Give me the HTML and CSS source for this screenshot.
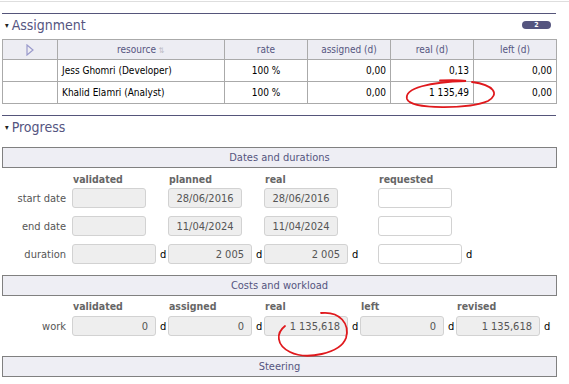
FILE: index.html
```html
<!DOCTYPE html>
<html>
<head>
<meta charset="utf-8">
<link rel="stylesheet" href="styles.css">
</head>
<body>
<div class="topline"></div>
<div class="page">
  <div class="title">
    <span class="caret">&#9662;</span><span class="title-text">Assignment</span>
    <span class="badge">2</span>
  </div>
  <table class="grid">
    <colgroup>
      <col class="c-icon"><col class="c-res"><col class="c-num"><col class="c-num"><col class="c-num"><col class="c-num">
    </colgroup>
    <thead>
      <tr>
        <th><svg class="tri" width="8" height="12" viewBox="0 0 8 12"><polygon points="1,1 7,6 1,11" fill="none" stroke="#9a9acc" stroke-width="1.2"/></svg></th>
        <th>resource <span class="sort">&#8645;</span></th>
        <th>rate</th>
        <th>assigned (d)</th>
        <th>real (d)</th>
        <th>left (d)</th>
      </tr>
    </thead>
    <tbody>
      <tr>
        <td></td><td class="name">Jess Ghomri (Developer)</td><td class="ctr">100 %</td><td class="num">0,00</td><td class="num">0,13</td><td class="num">0,00</td>
      </tr>
      <tr>
        <td></td><td class="name">Khalid Elamri (Analyst)</td><td class="ctr">100 %</td><td class="num">0,00</td><td class="num">1 135,49</td><td class="num">0,00</td>
      </tr>
    </tbody>
  </table>

  <div class="title title-2">
    <span class="caret">&#9662;</span><span class="title-text">Progress</span>
  </div>

  <div class="band band-first">Dates and durations</div>
  <div class="heads dates-cols">
    <div></div><div class="colh">validated</div><div class="colh">planned</div><div class="colh">real</div><div class="colh">requested</div>
  </div>
  <div class="rows dates-cols">
    <div class="lbl">start date</div>
    <div class="cell"><div class="field f-date"></div></div>
    <div class="cell"><div class="field f-date ctr">28/06/2016</div></div>
    <div class="cell"><div class="field f-date ctr">28/06/2016</div></div>
    <div class="cell"><div class="field f-date white"></div></div>

    <div class="lbl">end date</div>
    <div class="cell"><div class="field f-date"></div></div>
    <div class="cell"><div class="field f-date ctr">11/04/2024</div></div>
    <div class="cell"><div class="field f-date ctr">11/04/2024</div></div>
    <div class="cell"><div class="field f-date white"></div></div>

    <div class="lbl">duration</div>
    <div class="cell"><div class="field f-num"></div><span class="unit">d</span></div>
    <div class="cell"><div class="field f-num">2 005</div><span class="unit">d</span></div>
    <div class="cell"><div class="field f-num">2 005</div><span class="unit">d</span></div>
    <div class="cell"><div class="field f-num white"></div><span class="unit">d</span></div>
  </div>

  <div class="band band-costs">Costs and workload</div>
  <div class="heads costs-cols">
    <div></div><div class="colh">validated</div><div class="colh">assigned</div><div class="colh">real</div><div class="colh">left</div><div class="colh">revised</div>
  </div>
  <div class="rows costs-cols">
    <div class="lbl">work</div>
    <div class="cell"><div class="field f-num">0</div><span class="unit">d</span></div>
    <div class="cell"><div class="field f-num">0</div><span class="unit">d</span></div>
    <div class="cell"><div class="field f-num">1 135,618</div><span class="unit">d</span></div>
    <div class="cell"><div class="field f-num">0</div><span class="unit">d</span></div>
    <div class="cell"><div class="field f-num">1 135,618</div><span class="unit">d</span></div>
  </div>

  <div class="band band-steer">Steering</div>
</div>

<svg class="marks" width="569" height="384" viewBox="0 0 569 384">
  <path d="M440 80.5 C452 80 460 80 466 81 C430 82 404 88 407 99 C411 110 470 109 488 101 C500 94 494 85 472 82" fill="none" stroke="#e0191d" stroke-width="1.8" stroke-linecap="round"/>
  <path d="M321 313 C340 311 350 324 346 338 C340 354 306 360 290 352 C276 345 276 333 285 326" fill="none" stroke="#e0191d" stroke-width="1.8" stroke-linecap="round"/>
</svg>
</body>
</html>
```
FILE: styles.css
```css
html, body {
  margin: 0;
  padding: 0;
  background: #fff;
}
body {
  font-family: "DejaVu Sans Condensed", "DejaVu Sans", sans-serif;
  font-size: 10px;
  color: #000;
  position: relative;
  width: 569px;
  height: 384px;
  overflow: hidden;
}
.topline {
  height: 1px;
  margin-top: 1px;
  background: #dedede;
}
.page {
  margin-left: 2px;
  width: 555px;
}
.title {
  margin-top: 11px;
  border-top: 1px solid #55557a;
  width: 554px;
  height: 26px;
  box-sizing: border-box;
  padding-bottom: 3px;
  display: flex;
  align-items: center;
  color: #55557f;
}
.caret {
  font-size: 8px;
  margin-left: 3px;
  margin-right: 3px;
  color: #222;
}
.title-text {
  font-size: 14px;
}
.badge {
  margin-left: auto;
  margin-right: 5px;
  width: 29px;
  height: 8px;
  border-radius: 4px;
  background: #55557f;
  color: #fff;
  font-size: 7px;
  font-weight: bold;
  line-height: 8px;
  text-align: center;
}
.grid {
  border-collapse: collapse;
  width: 555px;
  table-layout: fixed;
}
.c-icon { width: 55px; }
.c-res { width: 167px; }
.c-num { width: 83px; }
.grid th, .grid td {
  border: 1px solid #aaaaaa;
  padding: 0 4px;
  white-space: nowrap;
}
.grid th {
  height: 19px;
  background: #ededf3;
  color: #55557f;
  font-weight: normal;
  text-align: center;
}
.grid td {
  height: 21px;
}
.tri {
  display: block;
  margin: 0 auto;
}
.sort {
  color: #bbbbc4;
  font-size: 8px;
}
.name { text-align: left; }
.ctr { text-align: center; }
.num { text-align: right; }
.title-2 {
  margin-top: 11px;
}
.band {
  box-sizing: border-box;
  width: 555px;
  height: 21px;
  border: 1px solid #808080;
  background: #eeeef4;
  color: #55557f;
  font-size: 11px;
  display: flex;
  align-items: center;
  justify-content: center;
}
.band-first { margin-top: 6px; }
.band-costs { margin-top: 11px; }
.band-steer { margin-top: 20px; }
.dates-cols {
  display: grid;
  grid-template-columns: 70px 96px 96px 114px 96px;
}
.costs-cols {
  display: grid;
  grid-template-columns: 70px 96px 96px 96px 96px 96px;
}
.heads {
  height: 12px;
  line-height: 12px;
  margin-top: 5px;
  margin-bottom: 3px;
}
.band-costs + .heads {
  margin-top: 4px;
  margin-bottom: 4px;
}
.rows {
  row-gap: 8px;
  align-items: center;
}
.colh {
  font-weight: bold;
  color: #666;
  padding-left: 1px;
  font-size: 10.5px;
}
.lbl {
  text-align: right;
  padding-right: 6px;
  color: #555;
  font-size: 11px;
}
.cell {
  display: flex;
  align-items: center;
  height: 20px;
}
.field {
  box-sizing: border-box;
  height: 20px;
  border: 1px solid #d2d2d2;
  border-radius: 3px;
  background: #eeeeee;
  color: #555;
  font-size: 11px;
  display: flex;
  align-items: center;
  justify-content: flex-end;
  padding: 0 7px;
  white-space: nowrap;
}
.field.ctr { justify-content: center; }
.f-date { width: 74px; }
.f-num { width: 84px; }
.field.white { background: #fff; }
.unit {
  margin-left: 4px;
  color: #000;
  font-size: 11px;
}
.marks {
  position: absolute;
  left: 0;
  top: 0;
  pointer-events: none;
}
```
